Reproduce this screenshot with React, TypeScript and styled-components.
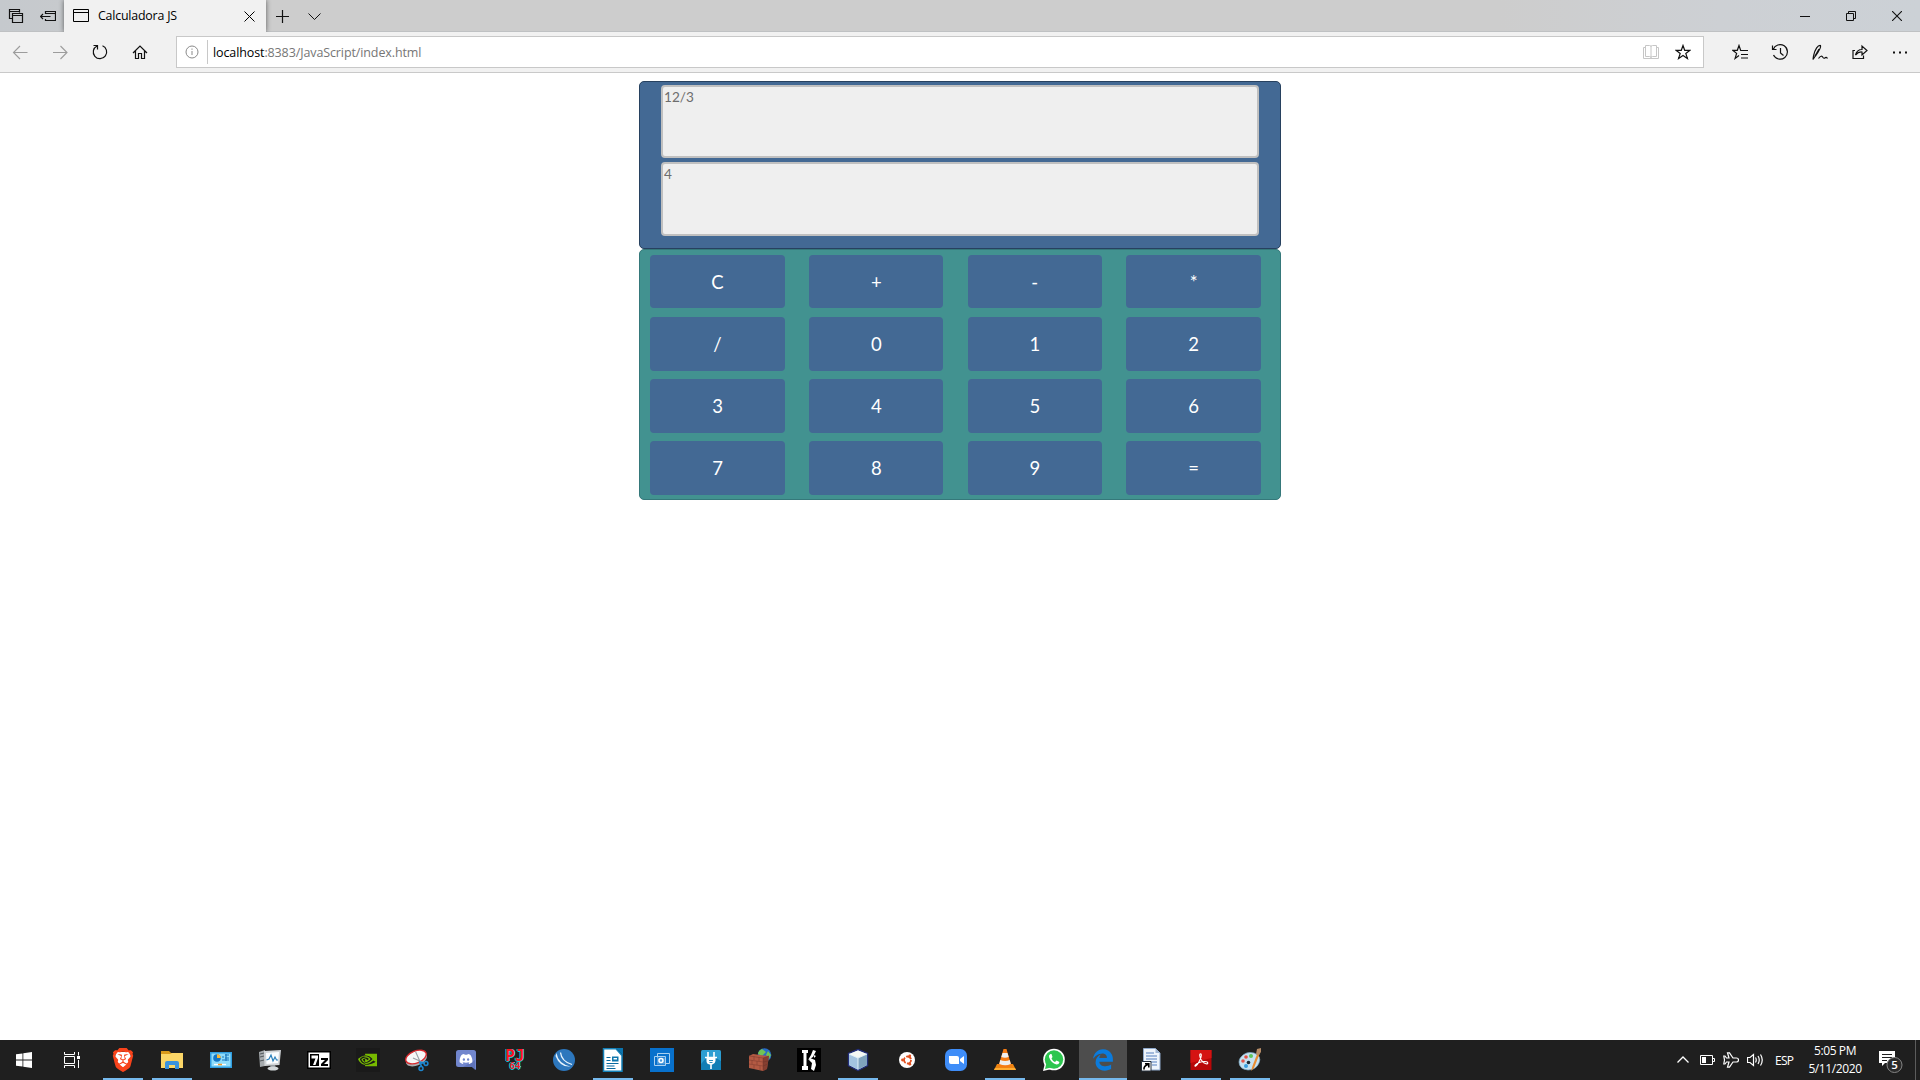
import React from "react";
import styled, { createGlobalStyle } from "styled-components";
import { SiBrave, SiNvidia } from "react-icons/si";
import { FaDiscord, FaEdgeLegacy } from "react-icons/fa6";

const Global = createGlobalStyle`
  * { box-sizing: border-box; }
  body { margin: 0; background: #fff; overflow: hidden; }
`;

const ui = `"Open Sans", "Noto Sans", sans-serif`;

const Screen = styled.div`
  display: flex;
  flex-direction: column;
  width: 1920px;
  height: 1080px;
  font-family: ${ui};
`;

/* ---------- browser chrome ---------- */
const TabStrip = styled.header`
  display: flex;
  height: 32px;
  background: linear-gradient(90deg, #c5c9cd 0, #cdcdcd 260px, #cdcdcd 1500px, #cdd0d4 1720px, #ccd1d6 100%);
  box-shadow: inset 0 -1px 0 #bfc1c3;
`;
const Slot = styled.div<{ $w?: number; $color?: string }>`
  display: flex;
  align-items: center;
  justify-content: center;
  flex: none;
  width: ${(p) => p.$w ?? 40}px;
  height: 100%;
  color: ${(p) => p.$color ?? "#111"};
`;
const Tab = styled.div`
  display: flex;
  align-items: center;
  width: 202px;
  padding: 0 11px 0 9px;
  background: #f1f1f1;
  box-shadow: 0 0 5px rgba(0, 0, 0, 0.55);
  clip-path: inset(0 -6px 0 -6px);
`;
const TabTitle = styled.span`
  flex: 1;
  margin: -1px 0 0 9px;
  font-size: 12.4px;
  letter-spacing: -0.2px;
  color: #000;
  white-space: nowrap;
`;
const Spacer = styled.div`
  flex: 1;
`;
const NavBar = styled.nav`
  display: flex;
  align-items: center;
  height: 41px;
  padding-bottom: 1px;
  background: #f1f1f1;
  box-shadow: inset 0 -1px 0 #c9c9c9;
`;
const Address = styled.div`
  display: flex;
  align-items: center;
  flex: 1;
  height: 32px;
  margin: 0 16px;
  border: 1px solid #c8c8c8;
  background: #fff;
`;
const AddressDivider = styled.div`
  width: 1px;
  height: 24px;
  background: #c8c8c8;
`;
const Url = styled.span`
  flex: 1;
  margin-left: 5px;
  font-size: 12.5px;
  letter-spacing: -0.11px;
  color: #767676;
  white-space: nowrap;
  b { font-weight: 400; color: #000; }
`;

/* ---------- calculator ---------- */
const Page = styled.main`
  flex: 1;
  padding-top: 8px;
  background: #fff;
`;
const Calculator = styled.section`
  width: 642px;
  margin: 0 auto;
  font-family: Lato, sans-serif;
`;
const Display = styled.div`
  display: flex;
  flex-direction: column;
  gap: 4px;
  height: 168px;
  padding: 3px 21px;
  border: 1px solid #27415f;
  border-radius: 5px;
  background: #436994;
`;
const Readout = styled.div<{ $h: number }>`
  height: ${(p) => p.$h}px;
  padding: 2px 1px;
  border: 2px solid #c0c0c0;
  border-radius: 4px;
  background: #efefef;
  color: #6d6d6d;
  font-size: 13.6px;
  line-height: 17px;
`;
const Keypad = styled.div`
  display: grid;
  grid-template-columns: 135px 134px 134px 135px;
  grid-template-rows: repeat(4, 54px);
  column-gap: 24.4px;
  row-gap: 8px;
  height: 251px;
  padding: 5px 10px;
  border: 1px solid #35787a;
  border-radius: 5px;
  background: #429290;
`;
const Key = styled.button`
  border: 0;
  border-radius: 4px;
  padding: 0 0 1px;
  background: #436994;
  color: #fff;
  font: 18.5px Lato, sans-serif;
  &:nth-child(-n + 4) { height: 53px; padding: 0; }
`;

/* ---------- taskbar ---------- */
const Taskbar = styled.footer`
  display: flex;
  height: 40px;
  background: #1f1f1f;
  color: #fff;
`;
const Apps = styled.div`
  display: flex;
  gap: 1px;
  margin-left: 3px;
`;
const AppButton = styled.div<{ $open?: boolean; $active?: boolean }>`
  display: flex;
  align-items: center;
  justify-content: center;
  width: 48px;
  height: 40px;
  background-color: ${(p) => (p.$active ? "#4d4d4d" : "transparent")};
  background-image: ${(p) => (p.$open || p.$active ? "linear-gradient(#76b9ed, #76b9ed)" : "none")};
  background-size: ${(p) => (p.$active ? "48px" : "40px")} 2px;
  background-position: center bottom;
  background-repeat: no-repeat;
`;
const Language = styled.div`
  display: flex;
  align-items: center;
  width: 36px;
  padding-left: 8px;
  font-size: 12px;
  letter-spacing: -0.7px;
`;
const Clock = styled.div`
  display: flex;
  flex-direction: column;
  justify-content: center;
  align-items: center;
  width: 64px;
  font-size: 12px;
  line-height: 18px;
  letter-spacing: -0.4px;
  white-space: nowrap;
`;
const ShowDesktop = styled.div`
  width: 5px;
  border-left: 1px solid #5c5c5c;
`;

type GlyphProps = { w?: number; h?: number; sw?: number; children: React.ReactNode };
const Glyph = ({ w = 16, h = 16, sw = 1, children }: GlyphProps) => (
  <svg width={w} height={h} viewBox={`0 0 ${w} ${h}`} fill="none" stroke="currentColor" strokeWidth={sw}>
    {children}
  </svg>
);
const Art = ({ children }: { children: React.ReactNode }) => (
  <svg width="24" height="24" viewBox="0 0 24 24">{children}</svg>
);

const Brave = () => (
  <Art>
    <path d="M5 4h14l1 6-4 9-4 3-4-3-4-9z" fill="#fff" />
    <g color="#f8431b"><SiBrave x={0} y={0} size={24} /></g>
  </Art>
);
const Explorer = () => (
  <Art>
    <path d="M1 3h8l2 2h12v2H1z" fill="#d99a1b" />
    <path d="M1 6h9l2-1h11v15H1z" fill="#fbd667" />
    <path d="M5 21v-6q0-2 2-2h10q2 0 2 2v6h-4v-4H9v4z" fill="#3a93dd" />
  </Art>
);
const ControlPanel = () => (
  <Art>
    <path d="M1 4h22v16H1z" fill="#2f9de0" />
    <path d="M2.500 5.500h19v13h-19z" fill="#8fdcfb" />
    <circle cx="8" cy="10" r="3.800" fill="#1476c5" />
    <path d="M8 10V6.200A3.800 3.800 0 0 1 11.800 10z" fill="#fdb833" />
    <path d="M13 9h2M16 7h4M16 10h4M13 12h7M17 6v7" stroke="#1976bd" strokeWidth="1.200" />
    <path d="M5 16.500h12" stroke="#fff" strokeWidth="1.300" />
    <path d="M9 16.500h4" stroke="#f29a2c" strokeWidth="1.500" />
  </Art>
);
const Monitor = () => (
  <Art>
    <path d="M1 4l6-2v16l-5 1z" fill="#a5aaad" />
    <path d="M2 6l4-1M2 9l4-1M2 13l4-1" stroke="#53595d" />
    <path d="M6 3l17-1-1.500 15L6.500 18z" fill="#d0d4d7" />
    <path d="M8 5l13-1-1 11-11.500 1z" fill="#fafdff" />
    <path d="M8.500 12l2.500-1 2-4 2 6 2-4 1.500 3 1.500 0" stroke="#297fba" fill="none" strokeWidth="1.200" />
    <path d="M12 17h5l1 3-5 1z" fill="#999fa3" />
    <ellipse cx="15" cy="20.500" rx="5.500" ry="2" fill="#d2d7d9" />
  </Art>
);
const SevenZip = () => (
  <Art>
    <path d="M0 3h24v18H0z" fill="#000" />
    <path d="M1.500 4.500h21v15h-21z" fill="#fff" />
    <path d="M3 6h9v12H3z" fill="#000" />
    <path d="M4.500 7.500h6.500v2.500l-2.500 7H6l2.500-6.500h-4z" fill="#fff" />
    <path d="M14 10h7v2l-4 4h4v2h-7v-2l4-4h-4z" fill="#000" />
  </Art>
);
const Nvidia = () => (
  <Art>
    <path d="M0 0h24v24H0z" fill="#1a1a1a" />
    <g color="#77b900"><SiNvidia x={2} y={2.5} size={19} /></g>
  </Art>
);
const Snip = () => (
  <Art>
    <g transform="rotate(-22 11 9)">
      <ellipse cx="10.500" cy="11.500" rx="11" ry="6" fill="#a9adb1" />
      <ellipse cx="11" cy="9" rx="10.800" ry="6" fill="#f7f7f7" stroke="#d9282c" strokeWidth="1.400" />
    </g>
    <path d="M10.500 3.500l4.500 10M8 10l9 4" stroke="#9aa0a6" strokeWidth="1.100" />
    <circle cx="21" cy="15.500" r="1.900" fill="none" stroke="#1d86cf" strokeWidth="1.500" />
    <circle cx="16" cy="20.500" r="2" fill="none" stroke="#1d86cf" strokeWidth="1.500" />
    <path d="M14.500 13.500l2 5M15.500 14.500l4 .5" stroke="#1d86cf" strokeWidth="1.800" />
  </Art>
);
const Discord = () => (
  <Art>
    <path d="M4.500 2h15Q22 2 22 4.500V22l-4-3H4.500Q2 19 2 16.500v-12Q2 2 4.500 2z" fill="#7186cd" />
    <path d="M9 19l9 0 3 3V12z" fill="#5267ad" opacity=".6" />
    <g color="#fff"><FaDiscord x={5} y={4} size={14} /></g>
  </Art>
);

/* two short lines of lettering with a thin cyan outline */
const Lettering = styled.div`
  display: flex;
  flex-direction: column;
  align-items: center;
  justify-content: space-between;
  height: 24px;
  padding: 1px 0 2px;
  font: bold 16px/13px "DejaVu Sans Mono", monospace;
  color: #ff1020;
  text-shadow: 1px 0 #12c8d8, -1px 0 #12c8d8, 0 1px #12c8d8;
  small { font-size: 9px; line-height: 8px; }
`;
const Project64 = () => (
  <Lettering>
    <span>PJ</span>
    <small>64</small>
  </Lettering>
);
const BlueBall = () => (
  <Art>
    <circle cx="12" cy="12" r="11" fill="#2d77bd" />
    <path d="M4.500 5Q6 15.500 18.500 18.500 8 19.500 3.500 8z" fill="#e8f4fd" />
    <path d="M8.500 4.500Q9.500 13.500 20 16.500" stroke="#e8f4fd" strokeWidth="1.300" fill="none" />
  </Art>
);
const Writer = () => (
  <Art>
    <path d="M2.500 .8H15l6 6.700v15.700h-18.500z" fill="#fff" stroke="#1380b8" strokeWidth="1.500" />
    <path d="M15 0h7v7.500z" fill="#0b74ae" />
    <path d="M5.500 9.500h4M5.500 12.500h4M5.500 15.500h12M5.500 18h8M5.500 20.500h9" stroke="#08699f" strokeWidth="1.200" />
    <path d="M11 8.500h6.500v5H11z" fill="#0e76ac" /><path d="M12.500 10h3.500v1.500h-3.500z" fill="#fff" />
  </Art>
);
const RemoteBox = () => (
  <Art>
    <path d="M0 0h24v24H0z" fill="#0871cc" />
    <path d="M7.500 5.500h12v10h-12zM4.500 8.500h11v9h-11z" fill="none" stroke="#a9d0f0" />
    <path d="M7 9.500h8v7H7z" fill="#4a99dc" />
    <circle cx="11" cy="12.500" r="2" fill="none" stroke="#fff" strokeWidth="1.500" />
  </Art>
);
const Plug = () => (
  <Art>
    <rect x="2" y="2" width="20" height="20" rx="1.500" fill="#2d9ed2" />
    <path d="M7 10L2 16v6h20v-9l-5-3z" fill="#127eb5" />
    <path d="M9 4v5M15 4v5M12 16v5M6 9.500h12" stroke="#fff" strokeWidth="1.600" />
    <path d="M7.500 10h9v3q-.5 3-3 3.500h-3q-3-.5-3-3.500z" fill="#fff" />
    <path d="M10 12.500h4M10.500 14.500h3" stroke="#3190bc" />
  </Art>
);
const Firewall = () => (
  <Art>
    <circle cx="16.500" cy="7" r="6.800" fill="#276cc8" />
    <path d="M14 1q-4 2-4 5l4 2 4-4zM20 3l3 4-2 4-3-4z" fill="#71c455" />
    <path d="M1 8l4-2 16 2-2 13-4 2-14-3z" fill="#b35a43" />
    <path d="M1 8l14 2 6-2M15 10v13M1 12l14 2 5-1M1 16l14 2 5-2M6 8v4M11 9v4M4 12v4M9 13v4M6 17v4M12 18v4" stroke="#8a4234" strokeWidth=".7" fill="none" />
    <path d="M15 10l6-2-2 13-4 2z" fill="#672d24" opacity=".6" />
  </Art>
);
const KScythe = () => (
  <Art>
    <path d="M0 0h24v24H0z" fill="#000" />
    <path d="M5 2h6v3H9.500v13H11v4H5v-4h1.500V5H5z" fill="#fff" />
    <path d="M16 2l3 1-3 6-5 3 3-5zM13 10l5 2 1 5-2 6-3-2 1-6-3-3zM17 7l2 1-2 2z" fill="#fff" />
  </Art>
);
const Cube = () => (
  <Art>
    <path d="M12 1.500l9.500 4v12L12 22.500 2.500 17.500v-12z" fill="#c1d8ea" stroke="#222d78" strokeWidth="1.400" />
    <path d="M12 2.500l9 3.500-9 4-9-4z" fill="#f4f8f4" />
    <path d="M3 6l9 4v11.500l-9-4.500z" fill="#a3c3df" />
    <path d="M12 10l9-4v11l-9 4.500z" fill="#7fa3be" />
    <path d="M3 6l9 4 9-4M12 10v11" stroke="#e9f5fa" fill="none" strokeWidth=".9" />
  </Art>
);
const Ubuntu = () => (
  <Art>
    <circle cx="12" cy="12" r="8" fill="#fff" />
    <circle cx="12.500" cy="12" r="3.500" fill="none" stroke="#e2501f" strokeWidth="1.800" strokeDasharray="6 1.330" />
    <circle cx="7.500" cy="12" r="1.400" fill="#e2501f" />
    <circle cx="14.800" cy="7.800" r="1.400" fill="#e2501f" />
    <circle cx="14.800" cy="16.200" r="1.400" fill="#e2501f" />
  </Art>
);
const Vlc = () => (
  <Art>
    <path d="M4 16h16l3 6H1z" fill="#ef8512" />
    <path d="M2 20h20l1 2H1z" fill="#ffad32" />
    <path d="M10.500 1h3l5 17q-6.500 3-13 0z" fill="#f57b12" />
    <path d="M9.500 5h5l1.200 4q-3.700 1.500-7.400 0zM7.200 12q5 2 9.600 0l1 4q-5.500 2.500-11.500 0z" fill="#eeeeee" />
  </Art>
);
const Zoom = () => (
  <Art>
    <rect x="1" y="1" width="22" height="22" rx="6.500" fill="#3f8df8" />
    <path d="M5 8h8q2 0 2 2v6H7q-2 0-2-2zM16 11l4-3v8l-4-3z" fill="#fff" />
  </Art>
);
const WhatsApp = () => (
  <Art>
    <circle cx="12" cy="11.500" r="10.800" fill="#fff" /><path d="M1 23l2-8 7 6z" fill="#fff" />
    <circle cx="12" cy="11.500" r="9.200" fill="#2dc64f" /><path d="M3 21l1.500-6 4.500 4.500z" fill="#2dc64f" />
    <path d="M8.500 6q-2 1-1.500 3 2 6 7.500 7.500 2.500 0 3-2.500l-3-1.500-1.500 1.500q-2.500-1-3.500-3.500L10.500 9 9.500 6z" fill="#fff" />
  </Art>
);
const Shortcut = () => (
  <Art>
    <path d="M3.500 .5h12l4.500 4.500v17H3.500z" fill="#edf4fc" stroke="#8fa9cb" /><path d="M15.500 .5L20 5h-4.500z" fill="#9fb5d2" />
    <path d="M6 5h8M6 8h11M6 11h11M11 14h6M12 17h5" stroke="#547fbd" strokeWidth="1.200" />
    <path d="M1.500 13.500h9.500V23H1.500z" fill="#fff" stroke="#26313d" />
    <path d="M4 21.500q-.5-3.500 4-5M5 15.800H8.800V19.500" stroke="#000" fill="none" strokeWidth="1.600" />
  </Art>
);
const Acrobat = () => (
  <Art>
    <path d="M1.500 2h21v20h-21z" fill="#b90708" /><path d="M1.500 2h21v8l-21 5z" fill="#d51312" />
    <path d="M12 6c-2-1-1.500 3 .3 6 2 3.500 6.500 5 6.500 3s-5-2-8.500-.5c-4 1.500-5.500 4.500-3.500 3.500s5.500-8 5.500-10.500c0-1-.1-1.300-.3-1.500z" stroke="#fff" strokeWidth="1.100" fill="none" />
  </Art>
);
const Paint = () => (
  <Art>
    <path d="M3 9Q8 3 16 5q8 3 5 10-3 7-11 7-9-1-9-8 0-3 2-5z" fill="#c5e2f2" stroke="#7eabc5" strokeWidth=".7" />
    <circle cx="5" cy="13" r="1.800" fill="#e2574c" /><circle cx="8" cy="9" r="1.800" fill="#e54f42" />
    <circle cx="13" cy="8" r="2" fill="#5dc65b" /><circle cx="8" cy="18" r="2" fill="#3a9fe0" /><circle cx="10.500" cy="14.500" r="1.800" fill="#1b2933" />
    <path d="M19.500 5l2 1-5.500 14-3 3 1.500-5z" fill="#e98d32" /><path d="M19 1l4-1v4l-2 3-3-1z" fill="#b58b66" />
  </Art>
);

const apps: { icon: React.ReactNode; open?: boolean; active?: boolean }[] = [
  { icon: <Brave />, open: true },
  { icon: <Explorer />, open: true },
  { icon: <ControlPanel /> },
  { icon: <Monitor /> },
  { icon: <SevenZip /> },
  { icon: <Nvidia /> },
  { icon: <Snip /> },
  { icon: <Discord /> },
  { icon: <Project64 /> },
  { icon: <BlueBall /> },
  { icon: <Writer />, open: true },
  { icon: <RemoteBox /> },
  { icon: <Plug /> },
  { icon: <Firewall /> },
  { icon: <KScythe /> },
  { icon: <Cube />, open: true },
  { icon: <Ubuntu /> },
  { icon: <Zoom /> },
  { icon: <Vlc />, open: true },
  { icon: <WhatsApp /> },
  { icon: <FaEdgeLegacy size={22} color="#0b7bdc" />, active: true },
  { icon: <Shortcut /> },
  { icon: <Acrobat />, open: true },
  { icon: <Paint />, open: true },
];

const keys = ["C", "+", "-", "*", "/", "0", "1", "2", "3", "4", "5", "6", "7", "8", "9", "="];

export default function App() {
  return (
    <Screen>
      <Global />
      <TabStrip>
        <Slot $w={32}><Glyph sw={1.2}><path d="M4.500 10.500h-3v-9h10v3M1.500 3.500h10M4.500 5.500h10v9h-10zM4.500 7.500h10" /></Glyph></Slot>
        <Slot $w={32}><Glyph sw={1.2}><path d="M5.500 6V3.500h10v9h-10V11M5.500 5.500h10M.5 8.500h10M3 6L.5 8.500 3 11" /></Glyph></Slot>
        <Tab>
          <Glyph w={16} h={14}><path d="M.5.5h15v12H.5zM.5 3.500h15" /></Glyph>
          <TabTitle>Calculadora JS</TabTitle>
          <Glyph w={11} h={11}><path d="M.5.5l10 10M10.500.5l-10 10" /></Glyph>
        </Tab>
        <Slot $w={33}><Glyph w={13} h={13} sw={1.2}><path d="M6.500 0v13M0 6.500h13" /></Glyph></Slot>
        <Slot $w={31}><Glyph w={13} h={7}><path d="M.5.5l6 6 6-6" /></Glyph></Slot>
        <Spacer />
        <Slot $w={46}><Glyph w={10} h={10}><path d="M0 5.500h10" /></Glyph></Slot>
        <Slot $w={46}><Glyph w={10} h={10}><path d="M.5 2.500h7v7h-7zM2.500 2.500v-2h7v7h-2" /></Glyph></Slot>
        <Slot $w={46}><Glyph w={10} h={10} sw={1.1}><path d="M0 0l10 10M10 0L0 10" /></Glyph></Slot>
      </TabStrip>
      <NavBar>
        <Slot $color="#9c9c9c"><Glyph sw={1.1}><path d="M15.500 8.500H1.500M8 2L1.500 8.500 8 15" /></Glyph></Slot>
        <Slot $color="#9c9c9c"><Glyph sw={1.1}><path d="M1 8.500h14M8.500 2L15 8.500 8.500 15" /></Glyph></Slot>
        <Slot><Glyph sw={1.2}><path d="M10.500 1.800A6.700 6.700 0 1 1 5 2M1.500 1.500h4v4" /></Glyph></Slot>
        <Slot><Glyph sw={1.2}><path d="M1 9l7-7 7 7M3.500 7v7.500h3v-5h3v5h3V7" /></Glyph></Slot>
        <Address>
          <Slot $w={30} $color="#8a8a8a"><Glyph w={14} h={14}><circle cx="7" cy="7" r="6" /><path d="M7 6v4M7 3.500v1.300" /></Glyph></Slot>
          <AddressDivider />
          <Url><b>localhost</b>:8383/JavaScript/index.html</Url>
          <Slot $w={32} $color="#c6c6c6"><Glyph><path d="M2.500 1.500h4q1.500 0 1.500 1 0-1 1.500-1h4v11h-4Q8 12.500 8 13.500q0-1-1.500-1h-4zM8 2v12M2.500 3.500h-2v11h15v-11h-2" /></Glyph></Slot>
          <Slot $w={31}><Glyph sw={1.2}><path d="M8 1.500l1.700 4.800H15l-4.200 3.100 1.600 5L8 11.400l-4.400 3 1.600-5L1 6.300h5.300z" /></Glyph></Slot>
          <Slot $w={5} />
        </Address>
        <Slot><Glyph sw={1.2}><path d="M9 6.500H8.700L7 1.500 5.300 6.300H.800l3.800 3.100-1.500 5L7 11.600M9 6.500h7M9 10.500h7M9 14h7" /></Glyph></Slot>
        <Slot><Glyph w={18} h={18} sw={1.2}><path d="M2.200 6.500A7.300 7.300 0 1 1 2.500 12M1.500 2.500v4h4M9.500 5v5l3 2.500" /></Glyph></Slot>
        <Slot><Glyph sw={1.2}><path d="M1.500 12C3 5 6 1 8.500 1.500 9.500 4 6 8.500 3 12.500L1 15.500 1.500 12M3 12L7 5M6.500 14.500q3-4 4.500-1 1 1.500 2.500 0 1-.5 2 1" /></Glyph></Slot>
        <Slot><Glyph sw={1.2}><path d="M3 6.500H1v8h10.500v-3M3.500 11Q5 5.500 10 5.500V2l5 4.500-5 4.500V8Q6.500 7.500 3.500 11z" /></Glyph></Slot>
        <Slot><Glyph w={14} h={3} sw={1.8}><path d="M0 1.500h2M6 1.500h2M12 1.500h2" /></Glyph></Slot>
      </NavBar>
      <Page>
        <Calculator>
          <Display>
            <Readout $h={73}>12/3</Readout>
            <Readout $h={74}>4</Readout>
          </Display>
          <Keypad>
            {keys.map((k) => <Key key={k}>{k}</Key>)}
          </Keypad>
        </Calculator>
      </Page>
      <Taskbar>
        <Slot $w={48}><svg width="16" height="16" viewBox="0 0 16 16" fill="#fff"><path d="M0 2.300L6.500 1.400v6.200H0zM7.300 1.300L16 0v7.600H7.300zM0 8.400h6.500v6.200L0 13.700zM7.300 8.400H16V16l-8.700-1.300z" /></svg></Slot>
        <Slot $w={48} $color="#fff"><Glyph><path d="M.5 0v2.500h10V0M.5 16v-2.500h10V16M.5 4.500h10v7H.5zM14.500 0v3.500M14.500 8v8" /><path d="M13 4h3v3h-3z" fill="#fff" stroke="none" /></Glyph></Slot>
        <Apps>
          {apps.map((a, i) => <AppButton key={i} $open={a.open} $active={a.active}>{a.icon}</AppButton>)}
        </Apps>
        <Spacer />
        <Slot $w={26} $color="#fff"><Glyph w={12} h={8} sw={1.3}><path d="M.5 6.500L6 1l5.500 5.500" /></Glyph></Slot>
        <Slot $w={23} $color="#fff"><Glyph w={15} h={10}><path d="M.5.500h12v9H.5zM13 3.500h1.500v3H13" /><path d="M2 2h4v6H2z" fill="#fff" stroke="none" /></Glyph></Slot>
        <Slot $w={24} $color="#fff"><Glyph sw={1.2}><path d="M6 6L4.500.8h2L10 6h3.500q2 0 2 2t-2 2H10l-3.500 5.200h-2L6 10H3.500L2 12H.800L1.500 8 .8 4H2l1.500 2z" /></Glyph></Slot>
        <Slot $w={24} $color="#fff"><Glyph w={17} h={14} sw={1.2}><path d="M.5 4.500H3l3.500-3v11l-3.500-3H.5zM8.500 4.500q1.500 2.500 0 5M11 3q2.500 4 0 8M13.500 1.500q3.500 5.500 0 11" /></Glyph></Slot>
        <Language>ESP</Language>
        <Clock><span>5:05 PM</span><span>5/11/2020</span></Clock>
        <Slot $w={48} $color="#fff">
          <svg width="26" height="26" viewBox="0 0 26 26">
            <path d="M1 4h16v12H7l-3 3v-3H1z" fill="#fff" />
            <path d="M4 7.500h10M4 10.500h10M4 13.500h5" stroke="#1f1f1f" />
            <circle cx="16.500" cy="18" r="7.500" fill="#2a2a2a" stroke="#858585" />
            <text x="16.500" y="22" textAnchor="middle" fontFamily="Open Sans, sans-serif" fontSize="11.500" fontWeight="600" fill="#fff">5</text>
          </svg>
        </Slot>
        <ShowDesktop />
      </Taskbar>
    </Screen>
  );
}
